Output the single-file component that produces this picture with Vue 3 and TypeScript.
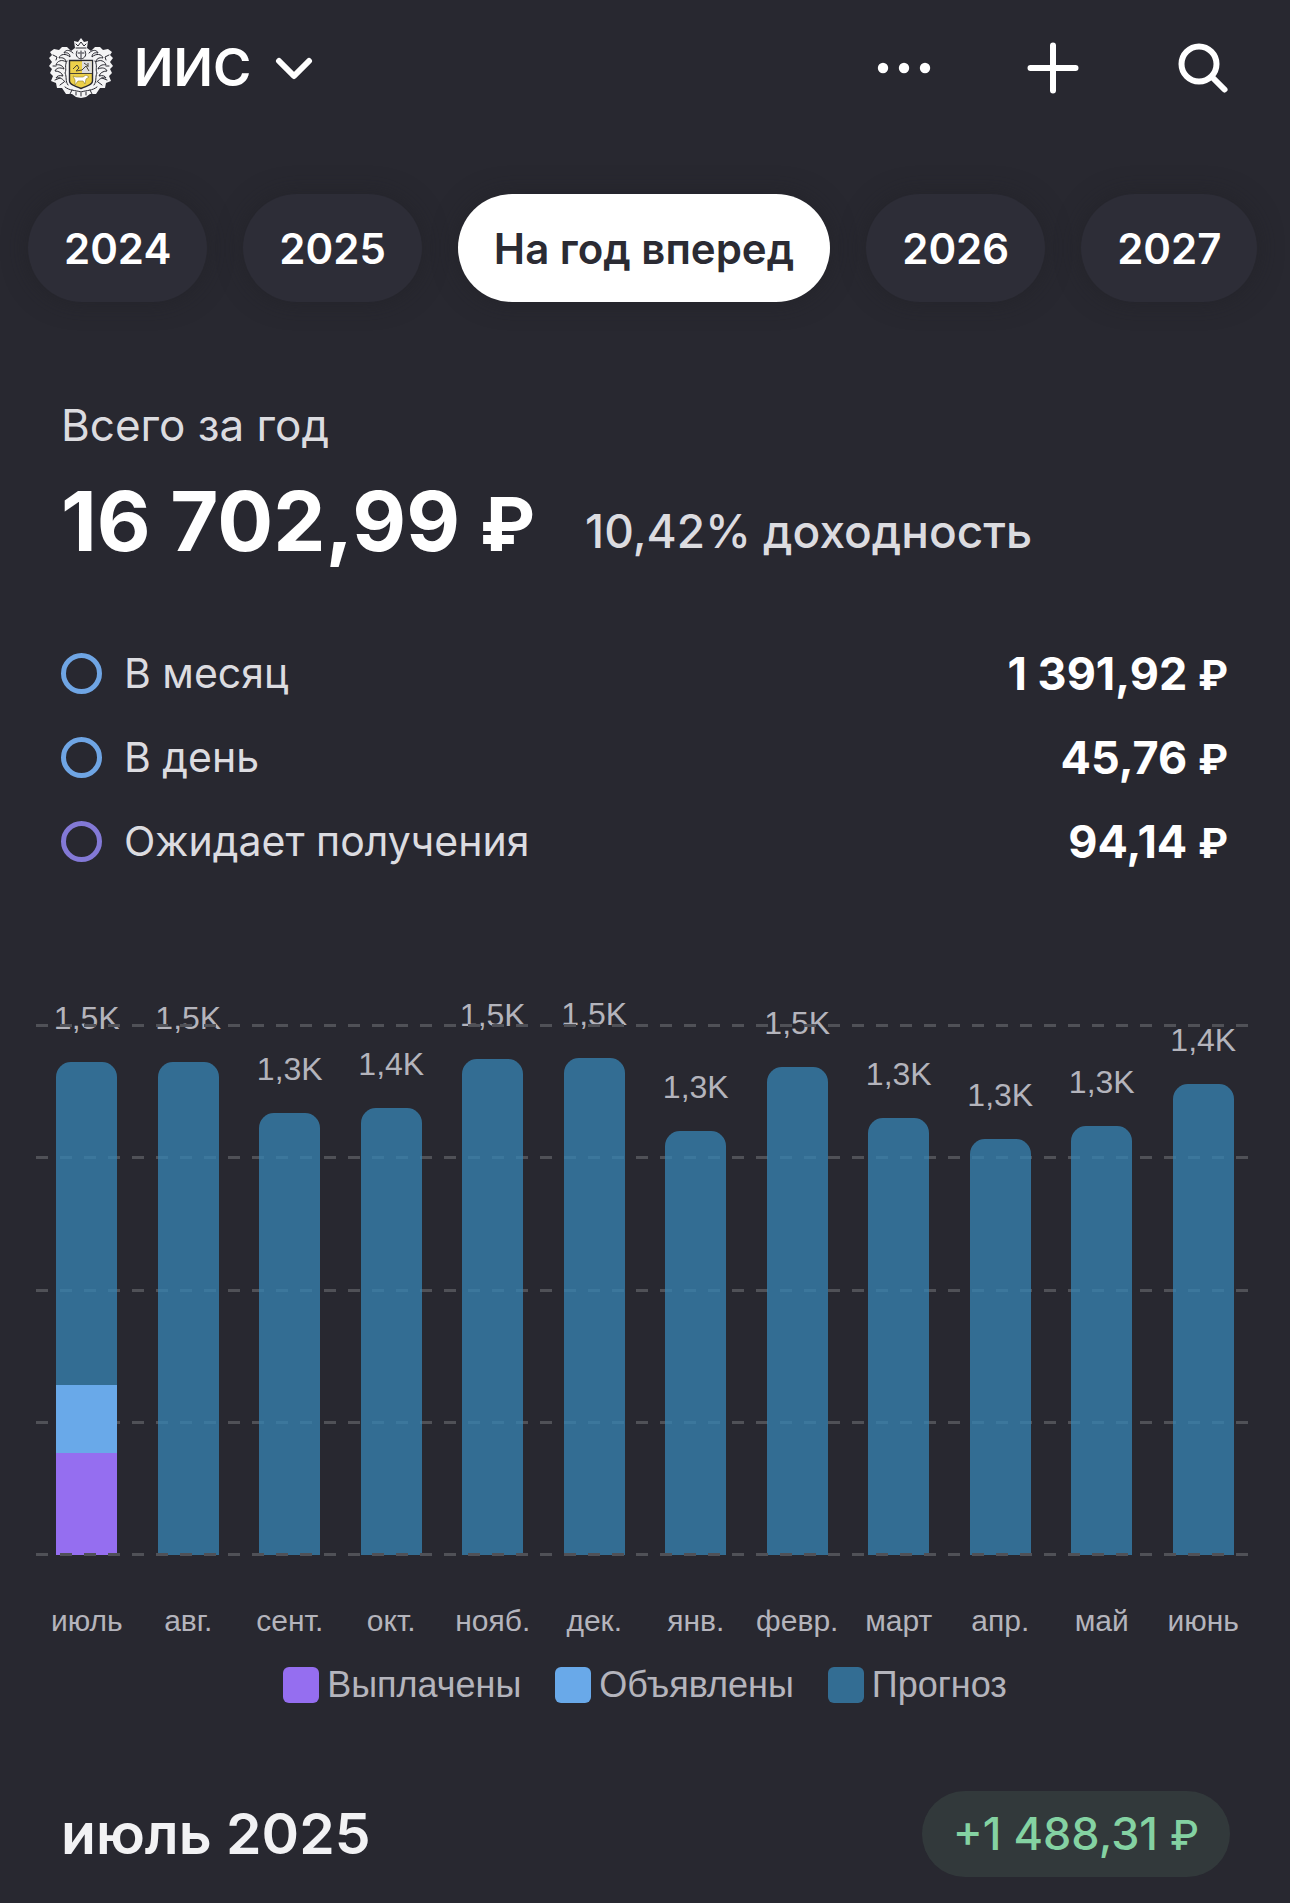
<script setup lang="ts">
import { ref } from 'vue'

interface Month {
  name: string
  label: string
  paid: number
  declared: number
  forecast: number
}

const AXIS_MAX = 1600

const periods: string[] = ['2024', '2025', 'На год вперед', '2026', '2027']
const selected = ref<string>('На год вперед')

const stats = [
  { name: 'В месяц', value: '1 391,92', tone: 'blue' },
  { name: 'В день', value: '45,76', tone: 'blue' },
  { name: 'Ожидает получения', value: '94,14', tone: 'violet' },
]

const months: Month[] = [
  { name: 'июль', label: '1,5K', paid: 308, declared: 204, forecast: 976 },
  { name: 'авг.', label: '1,5K', paid: 0, declared: 0, forecast: 1487 },
  { name: 'сент.', label: '1,3K', paid: 0, declared: 0, forecast: 1333 },
  { name: 'окт.', label: '1,4K', paid: 0, declared: 0, forecast: 1350 },
  { name: 'нояб.', label: '1,5K', paid: 0, declared: 0, forecast: 1498 },
  { name: 'дек.', label: '1,5K', paid: 0, declared: 0, forecast: 1500 },
  { name: 'янв.', label: '1,3K', paid: 0, declared: 0, forecast: 1279 },
  { name: 'февр.', label: '1,5K', paid: 0, declared: 0, forecast: 1472 },
  { name: 'март', label: '1,3K', paid: 0, declared: 0, forecast: 1319 },
  { name: 'апр.', label: '1,3K', paid: 0, declared: 0, forecast: 1255 },
  { name: 'май', label: '1,3K', paid: 0, declared: 0, forecast: 1295 },
  { name: 'июнь', label: '1,4K', paid: 0, declared: 0, forecast: 1423 },
]

const legend = [
  { name: 'Выплачены', tone: 'paid' },
  { name: 'Объявлены', tone: 'declared' },
  { name: 'Прогноз', tone: 'forecast' },
]

const total = (m: Month): number => m.paid + m.declared + m.forecast
const share = (part: number, whole: number): string => `${(part / whole) * 100}%`
</script>

<template>
  <main class="page">
    <header class="header">
      <button class="account" type="button">
        <svg class="crest" viewBox="0 0 66 60" aria-hidden="true">
          <path
            fill="#f4f4f5"
            d="M26 3L30 4L33 0L36 4L40 3L39 10L43 13L47 9L52 9L55 12L60 11L64 14L62 17L65 20L62 24L65 28L62 31L64 35L61 38L63 43L58 45L57 50L52 50L48 56L42 56L38 59L33 60L28 59L24 56L18 56L14 50L9 50L8 45L3 43L5 38L2 35L4 31L1 28L4 24L1 20L4 17L2 14L6 11L11 12L14 9L19 9L23 13L27 10Z"
          />
          <g fill="none" stroke="#282830" stroke-width="1" stroke-linecap="round">
            <path d="M28 6l2 2 3-4 3 4 2-2M28 10h10M29 13c-2 4 0 7 4 8 4-1 6-4 4-8M33 13v7M30 15h2M34 15h2" />
            <path d="M25 15c-4-4-8-3-9 0 4-1 6 1 6 4-4-4-10-3-11 1 4-1 7 1 7 4-4-3-9-1-10 3 4-1 7 1 8 4-4-2-8-1-9 2 4 0 7 2 8 5-4-1-6 0-7 2 4-1 7 1 9 4" />
            <path d="M41 15c4-4 8-3 9 0-4-1-6 1-6 4 4-4 10-3 11 1-4-1-7 1-7 4 4-3 9-1 10 3-4-1-7 1-8 4 4-2 8-1 9 2-4 0-7 2-8 5 4-1 6 0 7 2-4-1-7 1-9 4" />
            <path d="M19 23c-3 5 0 8-2 12 2 4 0 8 3 12M47 23c3 5 0 8 2 12-2 4 0 8-3 12M5 17l4 2-1 3M61 17l-4 2 1 3M5 28h3M61 28h-3M7 42l5-2M59 42l-5-2M12 47l4-3M54 47l-4-3" />
            <path d="M17 49c5 4 10 3 16 5 6-2 11-1 16-5M22 56l2-4M28 57v-3M33 58v-3M38 57v-3M44 56l-2-4" />
          </g>
          <path fill="#ecd04a" stroke="#282830" stroke-width="1.4" d="M21.500 22.500h23V43c0 4-5 4.500-11.500 7.500C26.500 47.500 21.500 47 21.500 43z" />
          <path fill="#dddde0" d="M34 23.200h9.800V35H34z" />
          <path fill="none" stroke="#4a4636" stroke-width="1" d="M22 35.500h22M25 31l4-4 2 3-3 3 6-1 4-4 3 5M36 25l4 3M40 25v4" />
          <path fill="#fff" stroke="#8f7d2a" stroke-width=".6" d="M25 38l3 1 7 0 3-2 3 2-3 2-1 5-2-3h-5l-3 4 0-5z" />
        </svg>
        <span class="account-name">ИИС</span>
        <svg class="chevron" viewBox="0 0 40 24" aria-hidden="true">
          <path d="M5 5l15 15L35 5" />
        </svg>
      </button>
      <nav class="actions" aria-label="Действия">
        <button class="icon-button" type="button" aria-label="Ещё">
          <svg viewBox="0 0 60 60" aria-hidden="true">
            <g><circle cx="9" cy="30" r="5.200" /><circle cx="30" cy="30" r="5.200" /><circle cx="51" cy="30" r="5.200" /></g>
          </svg>
        </button>
        <button class="icon-button" type="button" aria-label="Добавить">
          <svg viewBox="0 0 60 60" aria-hidden="true"><path d="M29 7.500v45M6.500 30h45" /></svg>
        </button>
        <button class="icon-button" type="button" aria-label="Поиск">
          <svg viewBox="0 0 60 60" aria-hidden="true"><circle cx="25" cy="26" r="17.500" /><path d="M38 39l12.500 12.500" /></svg>
        </button>
      </nav>
    </header>

    <nav class="periods" aria-label="Период">
      <button
        v-for="p in periods"
        :key="p"
        type="button"
        class="period"
        :class="{ active: p === selected }"
        :aria-pressed="p === selected"
        @click="selected = p"
      >{{ p }}</button>
    </nav>

    <section class="summary">
      <p class="caption">Всего за год</p>
      <div class="total">
        <strong class="amount">16 702,99 <span class="currency">₽</span></strong>
        <span class="yield">10,42% доходность</span>
      </div>
      <dl class="stats">
        <div v-for="s in stats" :key="s.name" class="stat">
          <dt class="stat-name"><i class="ring" :class="s.tone"></i>{{ s.name }}</dt>
          <dd class="stat-value">{{ s.value }} <span class="currency">₽</span></dd>
        </div>
      </dl>
    </section>

    <section class="chart" aria-label="Выплаты по месяцам">
      <div class="plot">
        <div class="grid">
          <i v-for="n in 5" :key="n" class="grid-line" :class="{ front: n === 1 || n === 5 }"></i>
        </div>
        <div v-for="m in months" :key="m.name" class="column">
          <span class="bar-label">{{ m.label }}</span>
          <div class="bar" :style="{ height: share(total(m), AXIS_MAX) }">
            <div class="forecast" :style="{ height: share(m.forecast, total(m)) }"></div>
            <div class="declared" :style="{ height: share(m.declared, total(m)) }"></div>
            <div class="paid" :style="{ height: share(m.paid, total(m)) }"></div>
          </div>
        </div>
      </div>
      <div class="axis">
        <span v-for="m in months" :key="m.name" class="axis-label">{{ m.name }}</span>
      </div>
      <ul class="legend">
        <li v-for="l in legend" :key="l.name" class="legend-item">
          <i class="swatch" :class="l.tone"></i>{{ l.name }}
        </li>
      </ul>
    </section>

    <section class="month">
      <h2 class="month-title">июль 2025</h2>
      <span class="badge">+1 488,31 <span class="currency">₽</span></span>
    </section>
  </main>
</template>

<style>
body {
  margin: 0;
  background: #282830;
}
</style>

<style scoped>
.page {
  box-sizing: border-box;
  min-height: 100vh;
  padding-bottom: 26px;
  overflow: hidden;
  background: #282830;
  color: #fff;
  font-family: Inter, "Noto Sans", sans-serif;
}
button {
  margin: 0;
  padding: 0;
  border: 0;
  background: none;
  color: inherit;
  font: inherit;
  cursor: pointer;
}
.header {
  display: flex;
  align-items: center;
  justify-content: space-between;
  height: 136px;
  padding: 0 56px 0 48px;
}
.account {
  display: flex;
  align-items: center;
}
.crest {
  width: 66px;
  height: 60px;
}
.account-name {
  margin: 0 23px 0 20px;
  font-size: 52px;
  font-weight: 600;
  line-height: 64px;
}
.chevron {
  width: 40px;
  height: 24px;
}
.chevron path,
.icon-button path,
.icon-button circle {
  stroke: #fff;
  stroke-width: 6;
  stroke-linecap: round;
  stroke-linejoin: round;
  fill: none;
}
.icon-button g circle {
  stroke: none;
  fill: #fff;
}
.actions {
  display: flex;
  gap: 90px;
}
.icon-button,
.icon-button svg {
  display: block;
  width: 60px;
  height: 60px;
}
.periods {
  display: flex;
  gap: 36px;
  margin: 58px 28px 0;
}
.period {
  height: 108px;
  padding: 0 36px;
  border-radius: 54px;
  background: #2d2d37;
  box-shadow: 0 0 24px rgba(32, 32, 36, 0.5);
  font-size: 42px;
  font-weight: 600;
  white-space: nowrap;
}
.period.active {
  background: #fff;
  color: #2b2b33;
}
.summary {
  padding: 97px 62px 0 61px;
}
.caption {
  margin: 0;
  color: #dcdce0;
  font-size: 44px;
  line-height: 52px;
}
.total {
  display: flex;
  align-items: flex-end;
  gap: 50px;
  margin-top: 28px;
}
.amount {
  font-size: 83px;
  font-weight: 700;
  line-height: 84px;
}
.currency {
  font-size: 90%;
  line-height: 0;
}
.yield {
  color: #dcdce0;
  font-size: 46px;
  font-weight: 500;
  line-height: 64px;
}
.stats {
  margin: 68px 0 0;
}
.stat {
  display: flex;
  align-items: center;
  justify-content: space-between;
  height: 84px;
}
.stat-name {
  display: flex;
  align-items: center;
  gap: 22px;
  color: #dcdce0;
  font-size: 41px;
}
.ring {
  box-sizing: border-box;
  width: 41px;
  height: 41px;
  border: 5px solid #6fa5e4;
  border-radius: 50%;
}
.ring.violet {
  border-color: #8379d6;
}
.stat-value {
  margin: 0;
  font-size: 45px;
  font-weight: 700;
}
.chart {
  margin: 142px 36px 0;
  color: #b4b4bc;
  font-family: "Liberation Sans", Arial, sans-serif;
}
.plot {
  position: relative;
  display: flex;
  height: 530px;
}
.grid {
  position: absolute;
  inset: -1px 0;
  display: flex;
  flex-direction: column;
  justify-content: space-between;
}
.grid-line {
  height: 3px;
  background: repeating-linear-gradient(90deg, #505157 0 12px, transparent 12px 24px);
}
.grid-line.front {
  position: relative;
  z-index: 2;
}
.column {
  z-index: 1;
  display: flex;
  flex: 1 1 0;
  flex-direction: column;
  align-items: center;
  justify-content: flex-end;
  min-width: 0;
}
.bar-label {
  margin-bottom: 24px;
  font-size: 32px;
  line-height: 40px;
}
.bar {
  flex: none;
  width: 60%;
  overflow: hidden;
  border-radius: 15px 15px 0 0;
}
.forecast {
  background: rgba(55, 130, 175, 0.78);
}
.declared {
  background: #69a9e9;
}
.paid {
  background: #956ef0;
}
.axis {
  display: flex;
  margin-top: 46px;
}
.axis-label {
  flex: 1 1 0;
  min-width: 0;
  font-size: 30px;
  line-height: 40px;
  text-align: center;
  white-space: nowrap;
}
.legend {
  display: flex;
  justify-content: center;
  gap: 34px;
  margin: 26px 0 0;
  padding: 0;
  list-style: none;
}
.legend-item {
  display: flex;
  align-items: center;
  gap: 8px;
  font-size: 36px;
  line-height: 36px;
}
.swatch {
  flex: none;
  width: 36px;
  height: 36px;
  border-radius: 6px;
}
.month {
  display: flex;
  align-items: center;
  justify-content: space-between;
  margin-top: 88px;
  padding: 0 24px 0 0;
  margin-left: 61px;
  margin-right: 36px;
}
.month-title {
  margin: 0;
  color: #f2f2f4;
  font-size: 57px;
  font-weight: 600;
  line-height: 64px;
}
.badge {
  padding: 0 31px;
  border-radius: 43px;
  background: #32393b;
  color: #84d2a2;
  font-size: 45px;
  font-weight: 500;
  line-height: 86px;
}
</style>
